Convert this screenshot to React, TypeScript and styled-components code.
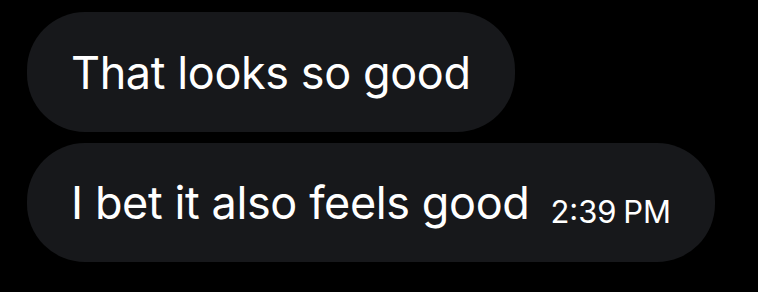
import React from 'react';
import styled, { createGlobalStyle } from 'styled-components';

const GlobalStyle = createGlobalStyle`
  html, body {
    margin: 0;
    padding: 0;
    background: #000;
  }
`;

const Thread = styled.div`
  display: flex;
  flex-direction: column;
  align-items: flex-start;
  gap: 11px;
  padding: 12px 0 0 27px;
  font-family: Inter, "Noto Sans", sans-serif;
  color: #fff;
`;

const Bubble = styled.div<{ $height: number }>`
  display: flex;
  align-items: center;
  height: ${p => p.$height}px;
  padding: 0 44px;
  border-radius: 58px;
  background: #17181b;
  box-sizing: border-box;
`;

const Text = styled.span`
  font-size: 45px;
  line-height: 1;
  letter-spacing: -0.4px;
  white-space: nowrap;
`;

const Time = styled.span`
  font-size: 31px;
  line-height: 1;
  word-spacing: -2px;
  margin-left: 21px;
  margin-top: 17px;
  white-space: nowrap;
`;

export default function App() {
  return (
    <>
      <GlobalStyle />
      <Thread>
        <Bubble $height={120}>
          <Text>That looks so good</Text>
        </Bubble>
        <Bubble $height={119}>
          <Text>I bet it also feels good</Text>
          <Time>2:39 PM</Time>
        </Bubble>
      </Thread>
    </>
  );
}
